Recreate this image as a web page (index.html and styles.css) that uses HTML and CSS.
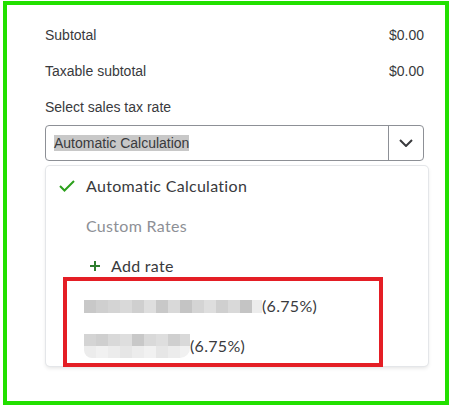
FILE: index.html
```html
<!DOCTYPE html>
<html>
<head>
<meta charset="utf-8">
<link rel="stylesheet" href="styles.css">
</head>
<body>
<div class="frame">
  <div class="panel">
    <div class="row"><span>Subtotal</span><span>$0.00</span></div>
    <div class="row"><span>Taxable subtotal</span><span>$0.00</span></div>
    <div class="label">Select sales tax rate</div>
    <div class="select">
      <div class="select-value"><span class="sel">Automatic Calculation</span></div>
      <div class="select-btn">
        <svg width="14" height="8" viewBox="0 0 14 8"><polyline points="1,1 7,7 13,1" fill="none" stroke="#393a3d" stroke-width="2"/></svg>
      </div>
    </div>
    <div class="menu">
      <div class="item checked">
        <svg class="check" width="16" height="12" viewBox="0 0 16 12"><polyline points="1,6 5.5,10.5 15,1" fill="none" stroke="#2ca01c" stroke-width="2"/></svg>
        <span>Automatic Calculation</span>
      </div>
      <div class="item muted">Custom Rates</div>
      <div class="item add">
        <svg class="plus" width="10" height="10" viewBox="0 0 10 10"><path d="M5 0V10M0 5H10" stroke="#2e7d2e" stroke-width="2"/></svg>
        <span>Add rate</span>
      </div>
      <div class="item rate">
        <div class="mosaic one">
          <i class="s2"></i><i class="s3"></i><i class="s4"></i><i class="s5"></i><i class="s3"></i><i class="s6"></i><i class="s2"></i><i class="s5"></i><i class="s1"></i><i class="s4"></i><i class="s6"></i><i class="s3"></i><i class="s5"></i><i class="s1"></i><i class="s7"></i>
        </div>
        <span>(6.75%)</span>
      </div>
      <div class="item rate">
        <div class="mosaic two">
          <div class="mrow"><i class="s4"></i><i class="s3"></i><i class="s5"></i><i class="s6"></i><i class="s2"></i><i class="s5"></i><i class="s6"></i><i class="s3"></i><i class="s5"></i></div>
          <div class="mrow low"><i class="s7"></i><i class="s8"></i><i class="s7"></i><i class="s9"></i><i class="s7"></i><i class="s8"></i><i class="s9"></i><i class="s7"></i><i class="s8"></i></div>
        </div>
        <span>(6.75%)</span>
      </div>
    </div>
  </div>
  <div class="annot"></div>
</div>
</body>
</html>
```

FILE: styles.css
```css
html, body {
  margin: 0;
  padding: 0;
  background: #ffffff;
}

.frame {
  position: relative;
  box-sizing: border-box;
  width: 446px;
  height: 404px;
  margin: 1px 0 0 3px;
  border: 4px solid #22e000;
  background: #ffffff;
}

.panel {
  padding: 22px 21px 0 38px;
  font-family: "Liberation Sans", Arial, sans-serif;
  font-size: 14px;
  line-height: 16px;
  color: #393a3d;
}

.row {
  display: flex;
  justify-content: space-between;
  margin-bottom: 20px;
}

.label {
  margin-bottom: 10px;
}

.select {
  display: flex;
  box-sizing: border-box;
  height: 36px;
  border: 1px solid #8d9096;
  border-radius: 4px;
}

.select-value {
  flex: 1;
  display: flex;
  align-items: center;
  padding-left: 8px;
}

.sel {
  background: #c8c8c8;
}

.select-btn {
  width: 34px;
  border-left: 1px solid #8d9096;
  display: flex;
  align-items: center;
  justify-content: center;
}

.menu {
  width: 382px;
  margin: 5px 0 0 1px;
  border-radius: 4px;
  box-shadow: 0 0 0 1px #e4e6e9, 0 2px 4px rgba(0, 0, 0, 0.12);
  font-family: Lato, "Open Sans", sans-serif;
  font-size: 16px;
  letter-spacing: 0.3px;
  color: #393a3d;
}

.item {
  height: 40px;
  display: flex;
  align-items: center;
  padding-left: 40px;
}

.item.checked {
  padding-left: 13px;
}

.check {
  margin-right: 11px;
}

.item.muted {
  color: #8d9096;
}

.item.add {
  padding-left: 44px;
}

.plus {
  margin-right: 11px;
}

.item.rate {
  padding-left: 38px;
}

.mosaic {
  display: flex;
}

.mosaic.one i {
  display: block;
  width: 12px;
  height: 13px;
}

.mosaic.one .s7 {
  width: 10px;
}

.mosaic.two {
  flex-direction: column;
  border-radius: 0 0 10px 8px;
  overflow: hidden;
}

.mrow {
  display: flex;
}

.mosaic.two i {
  display: block;
  width: 12px;
  height: 12px;
}

.mosaic.two .mrow i:last-child {
  width: 10px;
}

.s1 { background: #c4c4c4; }
.s2 { background: #c8c8c8; }
.s3 { background: #cfcfcf; }
.s4 { background: #d4d4d4; }
.s5 { background: #d9d9d9; }
.s6 { background: #dedede; }
.s7 { background: #ececec; }
.s8 { background: #f1f1f1; }
.s9 { background: #e6e6e6; }

.annot {
  position: absolute;
  left: 56px;
  top: 272px;
  width: 320px;
  height: 90px;
  box-sizing: border-box;
  border: 4px solid #e41e25;
}
```
